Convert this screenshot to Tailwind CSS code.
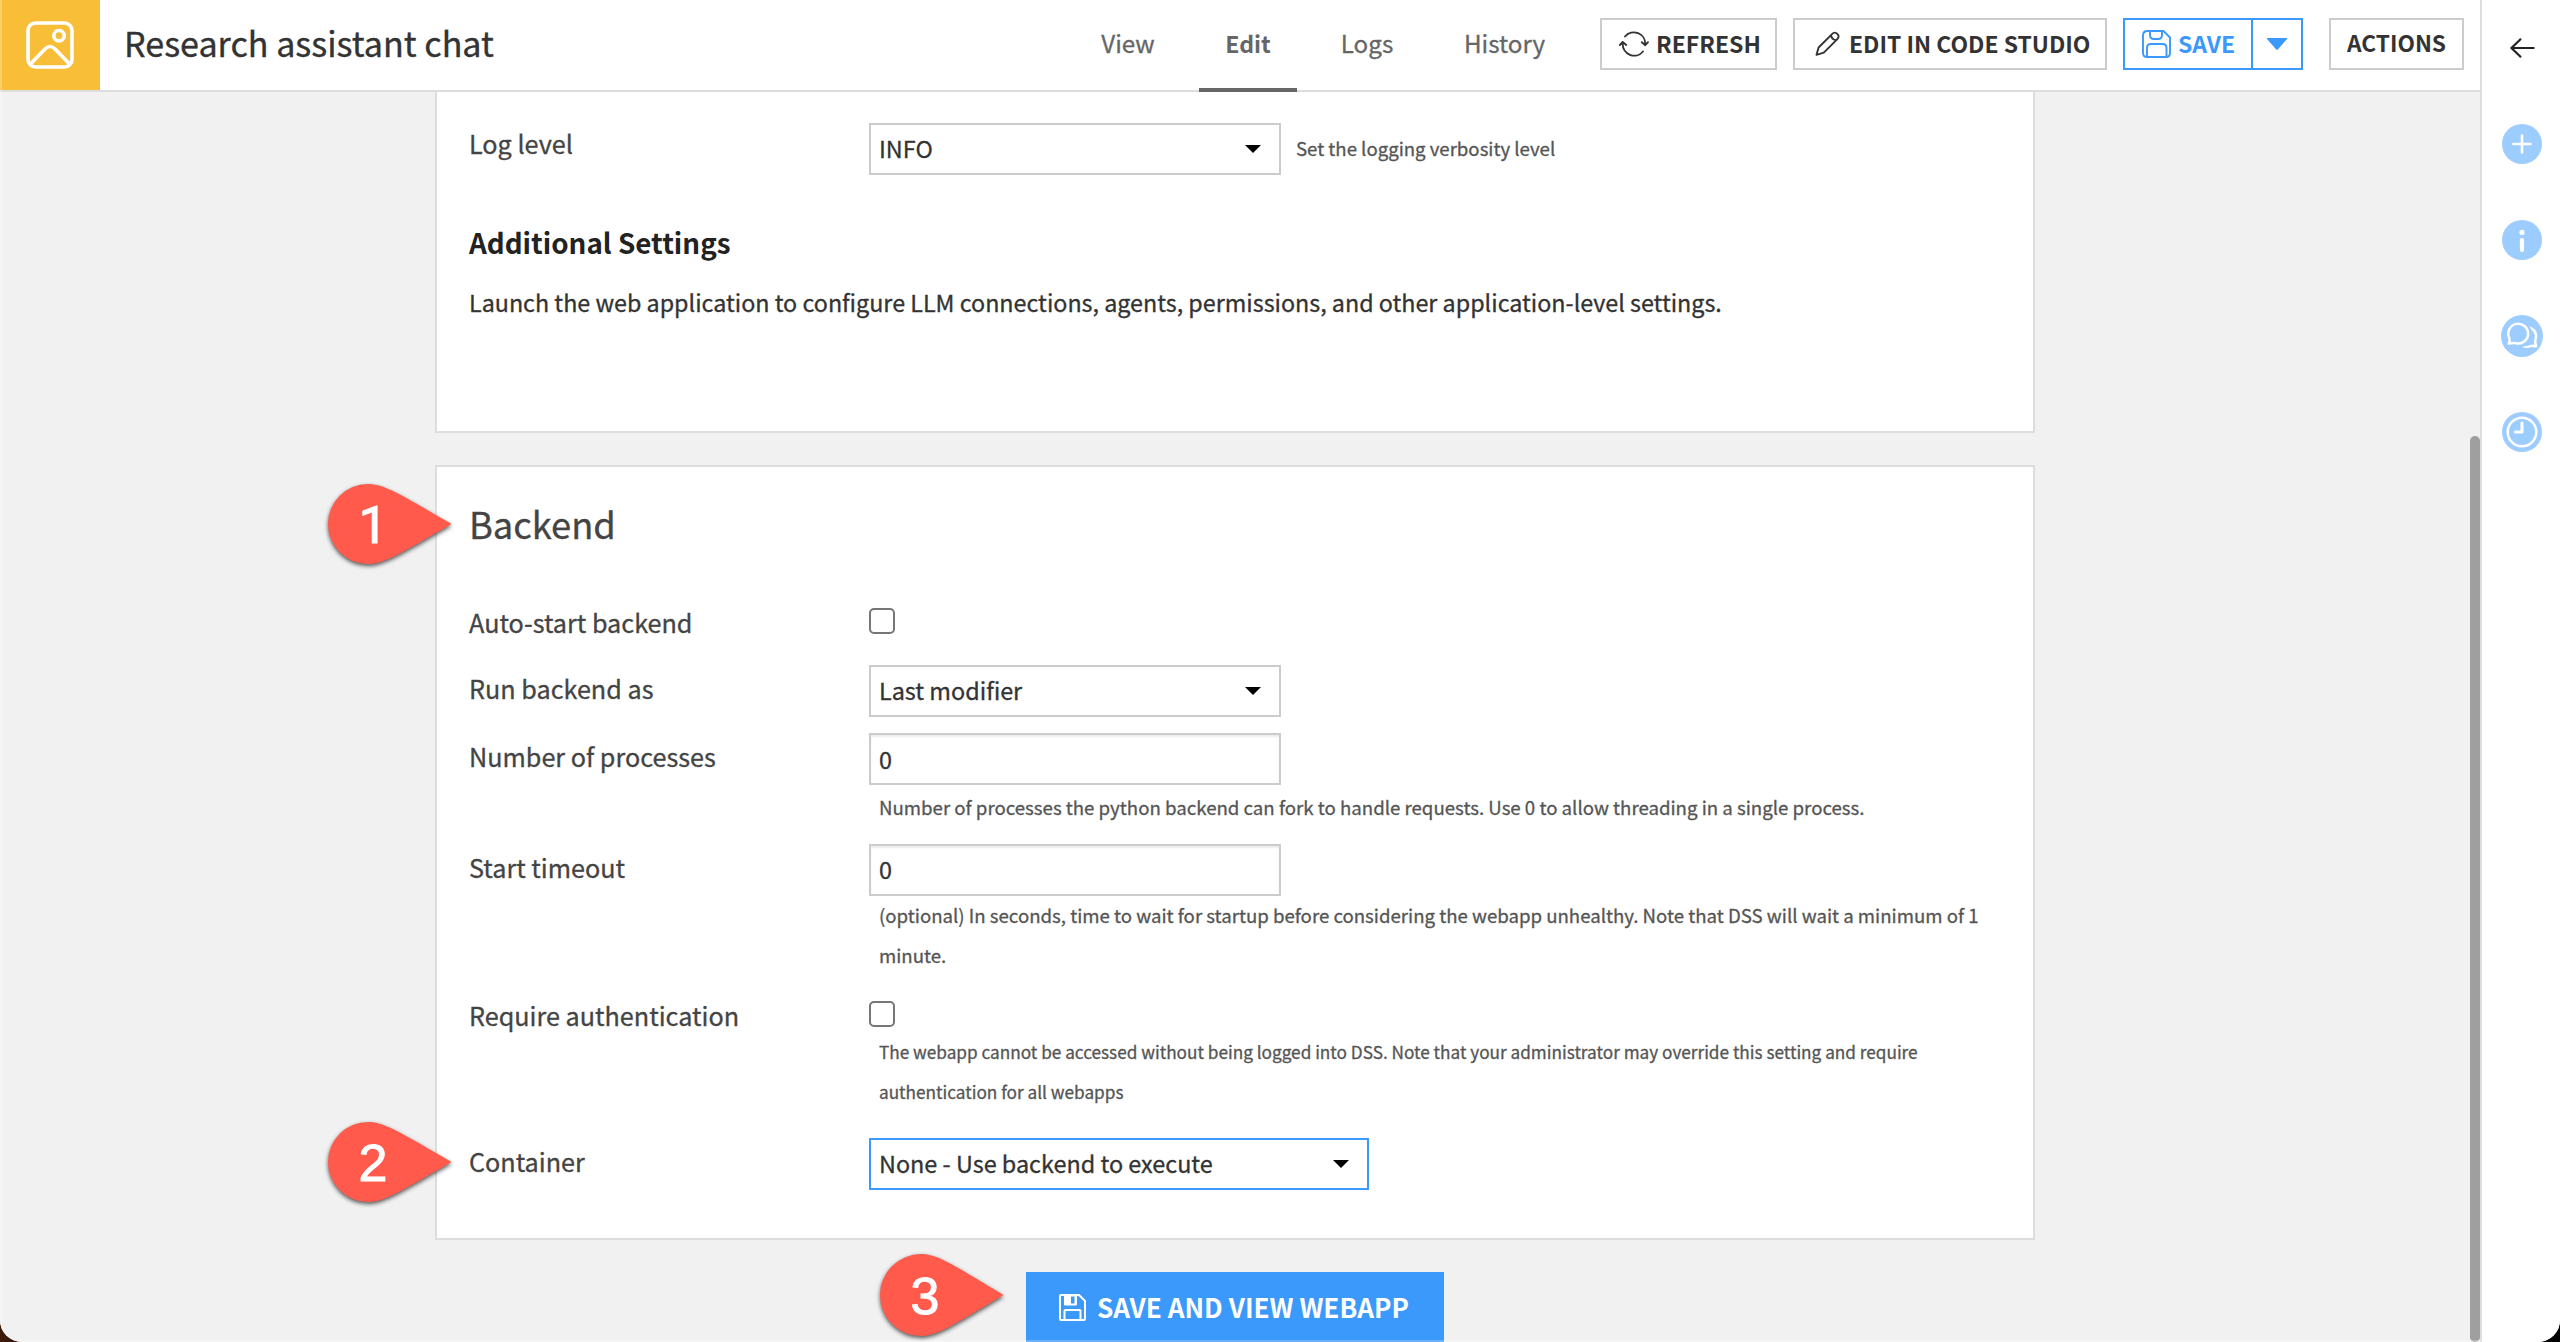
<!DOCTYPE html>
<html lang="en">
<head>
<meta charset="utf-8">
<title>Research assistant chat</title>
<script src="https://cdn.jsdelivr.net/npm/@tailwindcss/browser@4"></script>
</head>
<body class="bg-black">
<div class="relative h-[1342px] w-[2560px] overflow-hidden bg-linear-to-r from-[#3d1a0c] to-black to-10% font-['Noto_Sans_CJK_SC',sans-serif]">
<div class="relative flex h-full w-full overflow-hidden rounded-b-[22px] bg-white">

  <div class="flex w-[2480px] flex-col">
    <!-- Top bar -->
    <header class="flex h-[92px] shrink-0 border-b-2 border-[#ddd] bg-white">
      <div class="flex w-[100px] items-center justify-center bg-[#f9be38]">
        <svg class="h-12 w-12" viewBox="0 0 48 48" fill="none" stroke="#fff" stroke-width="3.6" stroke-linejoin="round">
          <rect x="2" y="2" width="44" height="44" rx="7.5"/>
          <circle cx="33" cy="14.7" r="5.2"/>
          <path d="M4 43.5 18.5 28.5Q24 22.5 29.500 28.500L44 43.500"/>
        </svg>
      </div>
      <h1 class="ml-[24px] h-[90px] w-[952px] text-[34.1px] leading-[84px] text-[#333] [-webkit-text-stroke:0.35px]">Research assistant chat</h1>
      <nav class="flex h-[92px] shrink-0 text-center text-[24.2px] leading-[86px] text-[#666] [-webkit-text-stroke:0.3px]">
        <a class="w-[104px]">View</a>
        <a class="ml-[19px] h-[92px] w-[98px] border-b-4 border-[#666] text-[23.1px] font-bold [-webkit-text-stroke:0]">Edit</a>
        <a class="ml-5 w-[100px]">Logs</a>
        <a class="ml-[20px] w-[135px]">History</a>
      </nav>
      <div class="mt-[18px] ml-[28px] flex h-[52px] text-[23px] leading-[48px] font-bold text-[#333]">
        <button class="flex w-[177px] border-2 border-[#ccc] pl-[17px]">
          <svg class="mt-[11px] h-[26px] w-[30px] shrink-0" viewBox="0 0 30 26" fill="none" stroke="#333" stroke-width="1.9" stroke-linecap="round" stroke-linejoin="round">
            <path d="M6 5.500A11.500 11.500 0 0 1 26.300 13.500M22.800 11.200 26.300 14.200 29 11.200M24 20.500A11.500 11.500 0 0 1 3.700 12.500M.900 14 3.700 11 7.200 14"/>
          </svg>
          <span class="-mt-px ml-[7px]">REFRESH</span>
        </button>
        <button class="ml-4 flex w-[314px] border-2 border-[#ccc] pl-[20px] text-[22.9px]">
          <svg class="mt-[11px] h-[26px] w-[26px] shrink-0" viewBox="0 0 26 26" fill="none" stroke="#333" stroke-width="1.9" stroke-linecap="round" stroke-linejoin="round">
            <path d="M1.500 23.800 3.600 16.500 17 3.100Q19.800 .300 22.300 2.900 24.900 5.500 22.100 8.300L8.800 21.600ZM16 4.200Q16.800 9 21.200 9.200"/>
          </svg>
          <span class="-mt-px ml-[8px]">EDIT IN CODE STUDIO</span>
        </button>
        <button class="ml-4 flex w-[130px] border-2 border-[#3b99fc] pl-[17px] text-[#3b99fc]">
          <svg class="mt-[10px] h-[28px] w-[29px] shrink-0" viewBox="0 0 29 28" fill="none" stroke="#3b99fc" stroke-width="1.9" stroke-linejoin="round">
            <path d="M5.500 1H21.500L28 7.500V23Q28 27 24 27H5Q1 27 1 23V5.500Q1 1 5.500 1ZM8 1V5Q8 9 12 9H16Q20 9 20 5V1M5 27V18Q5 14 9 14H20.500Q24.500 14 24.500 18V27"/>
          </svg>
          <span class="-mt-px ml-[7px]">SAVE</span>
        </button>
        <button class="flex w-[50px] justify-center border-2 border-l-0 border-[#3b99fc]">
          <svg class="mt-[18px] h-3 w-5" viewBox="0 0 20 12"><path fill="#3b99fc" d="M0 0H20V1L10.800 11.600Q10 12.300 9.200 11.600L0 1Z"/></svg>
        </button>
        <button class="ml-[26px] w-[135px] border-2 border-[#ccc] pb-[2px] text-[22.7px] leading-[46px]">ACTIONS</button>
      </div>
    </header>

    <!-- Scrolled settings form -->
    <main class="relative h-[1250px] bg-[#f1f1f1] pl-[435px]">
      <section class="h-[341px] w-[1600px] border-2 border-t-0 border-[#ddd] bg-white pt-[31px] pl-8 text-[25.2px] leading-10 text-[#444] [-webkit-text-stroke:0.3px]">
        <div class="flex h-[52px]">
          <div class="w-[400px] shrink-0">Log level</div>
          <div class="flex h-[52px] w-[412px] justify-between border-2 border-[#ccc] pr-[18px] pl-[8px] text-[23.4px] leading-[47px] text-[#333]">INFO
            <svg class="mt-5 h-2 w-4" viewBox="0 0 16 8"><path d="M0 0H16L8 8Z"/></svg>
          </div>
          <div class="ml-[15px] pt-[5px] text-[18.6px] text-[#555]">Set the logging verbosity level</div>
        </div>
        <h3 class="mt-[47px] text-[27.8px] font-bold text-[#222] [-webkit-text-stroke:0]">Additional Settings</h3>
        <p class="mt-5 text-[23.31px] text-[#333]">Launch the web application to configure LLM connections, agents, permissions, and other application-level settings.</p>
      </section>

      <section class="mt-8 h-[775px] w-[1600px] border-2 border-[#ddd] bg-white pt-8 pl-8 text-[25.2px] leading-10 text-[#444] [-webkit-text-stroke:0.3px]">
        <h2 class="h-[103px] text-[36.3px] leading-[48px]">Backend</h2>
        <div class="flex h-[63px]">
          <div class="w-[400px] shrink-0">Auto-start backend</div>
          <div class="mt-[6px] size-[26px] rounded-[5px] border-2 border-[#767676]"></div>
        </div>
        <div class="flex h-[68px]">
          <div class="w-[400px] shrink-0 pt-[3px]">Run backend as</div>
          <div class="flex h-[52px] w-[412px] justify-between border-2 border-[#ccc] pr-[18px] pl-[8px] text-[23.4px] leading-[47px] text-[#333]">Last modifier
            <svg class="mt-5 h-2 w-4" viewBox="0 0 16 8"><path d="M0 0H16L8 8Z"/></svg>
          </div>
        </div>
        <div class="flex h-[111px]">
          <div class="w-[400px] shrink-0 pt-[3px]">Number of processes</div>
          <div>
            <div class="h-[52px] w-[412px] border-2 border-[#ccc] pl-[8px] text-[23.4px] leading-[49px] text-[#333] inset-shadow-[0_2px_2px_rgb(0_0_0/0.075)]">0</div>
            <p class="mt-[2px] pl-[10px] text-[18.65px] text-[#555]">Number of processes the python backend can fork to handle requests. Use 0 to allow threading in a single process.</p>
          </div>
        </div>
        <div class="flex h-[151px]">
          <div class="w-[400px] shrink-0 pt-[3px]">Start timeout</div>
          <div>
            <div class="h-[52px] w-[412px] border-2 border-[#ccc] pl-[8px] text-[23.4px] leading-[47px] text-[#333] inset-shadow-[0_2px_2px_rgb(0_0_0/0.075)]">0</div>
            <p class="-mt-px pl-[10px] text-[18.64px] text-[#555]">(optional) In seconds, time to wait for startup before considering the webapp unhealthy. Note that DSS will wait a minimum of 1<br>minute.</p>
          </div>
        </div>
        <div class="flex h-[143px]">
          <div class="w-[400px] shrink-0">Require authentication</div>
          <div>
            <div class="mt-[6px] size-[26px] rounded-[5px] border-2 border-[#767676]"></div>
            <p class="mt-[5px] pl-[10px] text-[17.2px] text-[#555]">The webapp cannot be accessed without being logged into DSS. Note that your administrator may override this setting and require<br>authentication for all webapps</p>
          </div>
        </div>
        <div class="flex h-[52px]">
          <div class="w-[400px] shrink-0 pt-[3px]">Container</div>
          <div class="flex h-[52px] w-[500px] justify-between border-2 border-[#3b99fc] pr-[18px] pl-[8px] text-[23.4px] leading-[47px] text-[#333]">None - Use backend to execute
            <svg class="mt-5 h-2 w-4" viewBox="0 0 16 8"><path d="M0 0H16L8 8Z"/></svg>
          </div>
        </div>
      </section>

      <button class="mt-8 ml-[591px] flex h-[70px] w-[418px] bg-[#3b99fc] pl-[33px] text-[26.15px] leading-[71px] font-bold text-white">
        <svg class="mt-[22px] h-[27px] w-[27px] shrink-0" viewBox="0 0 27 27" fill="none" stroke="#fff" stroke-width="2">
          <path d="M2 1H20L26 7V25Q26 26 25 26H2Q1 26 1 25V2Q1 1 2 1ZM5.500 26V17Q5.500 16 6.500 16H20.500Q21.500 16 21.500 17V26"/>
          <path fill="#fff" stroke="none" d="M5 1H18V10.500Q18 11.500 17 11.500H6Q5 11.500 5 10.500ZM12 2.500V9.500H15.500V2.500Z" fill-rule="evenodd"/>
        </svg>
        <span class="ml-[11px]">SAVE AND VIEW WEBAPP</span>
      </button>

      <div class="absolute top-[344px] right-0 h-[906px] w-[10px] rounded-full bg-[#9f9f9f]"></div>

      <!-- Numbered callouts -->
      <svg class="absolute top-[392px] left-[328px] h-[80px] w-[124px] overflow-visible font-[Roboto,sans-serif] text-[52px] drop-shadow-[0_2px_2px_rgb(0_0_0/0.65)]" viewBox="0 0 124 80">
        <path fill="#ff5a4c" d="M40 0C56 0 72 10 123.500 40 72 70 56 80 40 80A40 40 0 0 1 40 0Z"/>
        <text x="45" y="59" text-anchor="middle" fill="#fff" stroke="#fff">1</text>
      </svg>
      <svg class="absolute top-[1030px] left-[328px] h-[80px] w-[124px] overflow-visible font-['Liberation_Sans',sans-serif] text-[52px] drop-shadow-[0_2px_2px_rgb(0_0_0/0.65)]" viewBox="0 0 124 80">
        <path fill="#ff5a4c" d="M40 0C56 0 72 10 123.500 40 72 70 56 80 40 80A40 40 0 0 1 40 0Z"/>
        <text x="45" y="59" text-anchor="middle" fill="#fff" stroke="#fff">2</text>
      </svg>
      <svg class="absolute top-[1162px] left-[880px] h-[82px] w-[124px] overflow-visible font-['Liberation_Sans',sans-serif] text-[52px] drop-shadow-[0_2px_2px_rgb(0_0_0/0.65)]" viewBox="0 0 124 82">
        <path fill="#ff5a4c" d="M41 0C57 0 72 10 123.500 41 72 72 57 82 41 82A41 41 0 0 1 41 0Z"/>
        <text x="45" y="60" text-anchor="middle" fill="#fff" stroke="#fff">3</text>
      </svg>
    </main>
  </div>

  <!-- Right panel rail -->
  <aside class="flex w-[80px] flex-col items-center border-l-2 border-[#ddd] bg-white pt-[38px] pl-[2px]">
    <svg class="h-5 w-[26px]" viewBox="0 0 26 20" fill="none" stroke="#222" stroke-width="2.200"><path d="M25.500 10H2.500M12 .800 2.500 10 12 19.200"/></svg>
    <svg class="mt-[66px] size-10" viewBox="0 0 40 40" fill="none" stroke="#fff" stroke-width="2.600" stroke-linecap="round"><circle cx="20" cy="20" r="20" fill="#9dccff" stroke="none"/><path d="M11.500 20H28.500M20 11.500V28.500"/></svg>
    <svg class="mt-[56px] size-10" viewBox="0 0 40 40"><circle cx="20" cy="20" r="20" fill="#9dccff"/><circle cx="20" cy="12.400" r="2.600" fill="#fff"/><path d="M20 20V30" stroke="#fff" stroke-width="4.200" stroke-linecap="round"/></svg>
    <svg class="mt-[55px] size-[42px]" viewBox="0 0 42 42"><circle cx="21" cy="21" r="21" fill="#9dccff"/>
      <path d="M7.800 28.600Q9.200 25.500 8.200 22.800A9.900 9.900 0 1 1 14 28Q11 27.600 7.800 28.600Z" fill="none" stroke="#fff" stroke-width="2.500" stroke-linejoin="round"/>
      <path fill="#fff" d="M28.300 11.300Q35.800 13.600 36.400 20.600 36.400 23 35.500 25.200 35.300 28 36.500 31.200 35.500 33.200 34 32.500L30.500 32Q25 34 21 31.700 28 31 30.200 29.500L33.400 29.800Q32.500 27 33.600 23 34.400 19.500 32.200 16.800 30 14.500 28.300 11.300Z"/>
    </svg>
    <svg class="mt-[55px] size-10" viewBox="0 0 40 40" fill="none" stroke="#fff" stroke-width="2.500"><circle cx="20" cy="20" r="20" fill="#9dccff" stroke="none"/><circle cx="20" cy="20" r="14.300"/><path stroke-width="3" stroke-linecap="round" stroke-linejoin="round" d="M20 11V20H13.500"/></svg>
  </aside>

  <!-- Window edge highlight -->
  <div class="pointer-events-none absolute inset-0 rounded-b-[22px] border-2 border-t-0 border-white/25"></div>
</div>
</div>
</body>
</html>
